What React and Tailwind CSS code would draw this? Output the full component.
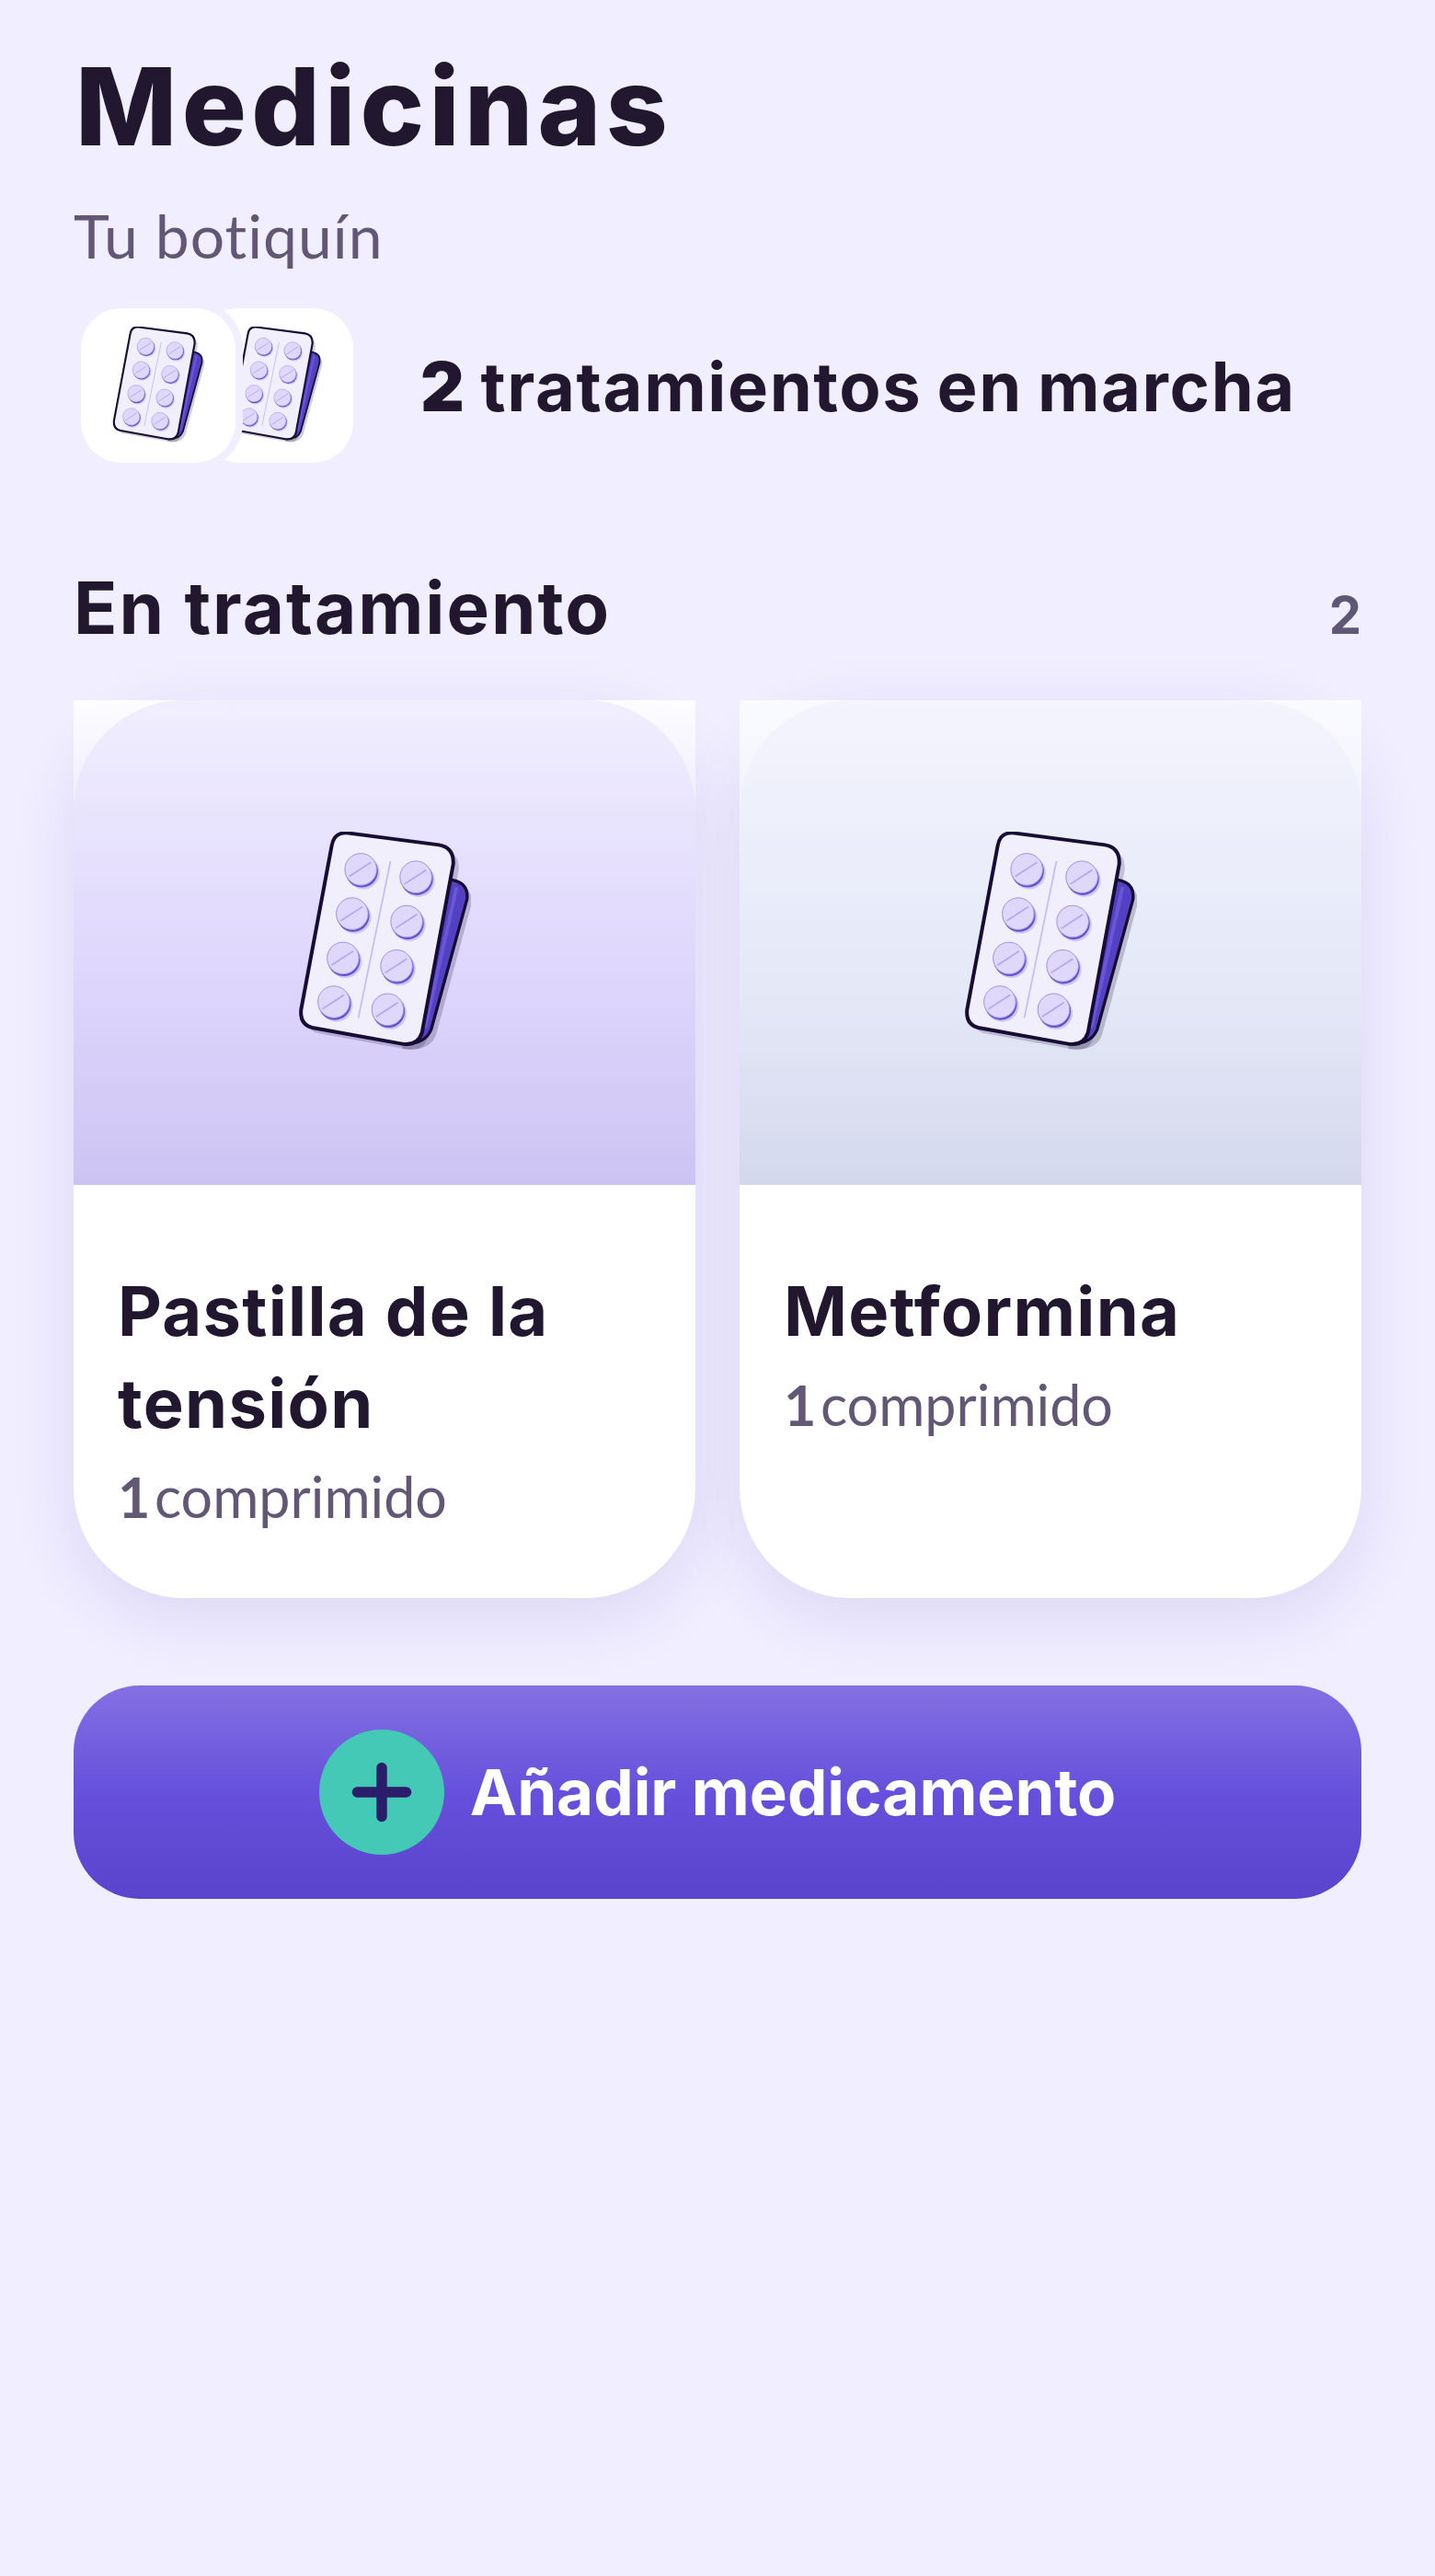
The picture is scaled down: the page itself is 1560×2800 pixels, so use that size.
const FRONT = "M290 133 L590 172 Q640 180 637 235 L535 785 Q520 830 470 822 L180 770 Q135 760 140 710 L240 175 Q248 130 290 133 Z";

const Blister = ({ className }) => {
  const pills = [
    [335, 252], [515, 277], [307, 397], [485, 422],
    [277, 542], [452, 567], [247, 685], [423, 710],
  ];
  return (
    <svg viewBox="130 130 565 725" className={className} aria-hidden="true">
      <path d="M600 300 L650 302 Q703 312 697 365 L580 795 Q558 848 470 838 Z" fill="#1c1238" opacity="0.22" />
      <path d={FRONT} transform="translate(18 18)" fill="#1c1238" opacity="0.2" />
      <path d="M600 285 L635 287 Q688 297 682 350 L565 775 Q545 825 470 822 Z" fill="#5341c4" stroke="#170c33" strokeWidth="10" strokeLinejoin="round" />
      <path d="M648 310 L545 770" stroke="#6a56d6" strokeWidth="12" fill="none" />
      <path d={FRONT} fill="#f2effd" stroke="#170c33" strokeWidth="12" />
      <path d="M432 225 L327 738" stroke="#c5baf2" strokeWidth="5" />
      {pills.map(([x, y], i) => (
        <g key={i}>
          <circle cx={x + 8} cy={y + 11} r="54" fill="#8b7cd8" opacity="0.35" />
          <circle cx={x + 3} cy={y + 6} r="53" fill="#6350cc" />
          <circle cx={x} cy={y} r="52" fill="#dfd8fa" stroke="#9f90e6" strokeWidth="3" />
          <path d={`M${x - 36} ${y + 22} L${x + 32} ${y - 22}`} stroke="#b3a5ee" strokeWidth="5" strokeLinecap="round" />
        </g>
      ))}
    </svg>
  );
};

const Card = ({ name, outer, inner }) => (
  <div className="flex flex-col rounded-[120px] bg-white shadow-[0_20px_70px_rgba(80,60,180,0.13)]">
    <div className={`relative h-[527px] ${outer}`}>
      <div className={`absolute inset-0 rounded-t-[120px] ${inner}`} />
      <div className="relative flex h-full items-center justify-center">
        <Blister className="h-[242px] w-[188px]" />
      </div>
    </div>
    <div className="flex h-[449px] flex-col px-12 pt-[87px] text-[#21182f]">
      <h3 className="font-['Inter',sans-serif] text-[74px] font-bold leading-[100px] tracking-[1.3px]">{name}</h3>
      <p className="mt-[12px] font-['Lato',sans-serif] text-[61px] leading-[80px] text-[#625875] [word-spacing:-11px]">
        <span className="font-bold">1</span> comprimido
      </p>
    </div>
  </div>
);

export default function App() {
  return (
    <div className="min-h-[2800px] bg-[#f1eeff] px-20 pt-[48px] font-['Inter',sans-serif] text-[#21182f]">
      <h1 className="pl-[2px] text-[117px] font-extrabold leading-[136px] tracking-[5.3px]">Medicinas</h1>
      <p className="mt-[32px] font-['Lato',sans-serif] text-[66px] leading-[80px] tracking-[1px] text-[#625875]">Tu botiquín</p>

      <div className="mt-[39px] flex items-center">
        <div className="ml-2 flex">
          <div className="relative z-10 flex h-[168px] w-[168px] items-center justify-center rounded-[44px] bg-white ring-8 ring-[#f1eeff]">
            <Blister className="h-[128px] w-[100px]" />
          </div>
          <div className="-ml-10 flex h-[168px] w-[168px] items-center justify-center rounded-[44px] bg-white">
            <Blister className="h-[128px] w-[100px]" />
          </div>
        </div>
        <p className="ml-[73px] mt-[2px] text-[74px] font-bold leading-[96px] tracking-[1.6px] [word-spacing:-3px]">
          <span className="font-black">2</span> tratamientos en marcha
        </p>
      </div>

      <div className="mt-[110px] flex items-baseline justify-between">
        <h2 className="text-[78px] font-bold leading-[96px] tracking-[2px]">En tratamiento</h2>
        <span className="text-[56px] font-bold leading-[64px] text-[#5f5773]">2</span>
      </div>

      <div className="mt-[52px] grid grid-cols-2 items-stretch gap-12">
        <Card
          name="Pastilla de la tensión"
          outer="bg-gradient-to-b from-[#fdfcff] via-[#ece7fe] via-30% to-[#cdc3f3]"
          inner="bg-gradient-to-b from-[#f1eefe] via-[#ddd5fc] via-60% to-[#cdc3f3]"
        />
        <Card
          name="Metformina"
          outer="bg-gradient-to-b from-[#fafbff] via-[#eef1fb] via-30% to-[#d4d8ec]"
          inner="bg-gradient-to-b from-[#f3f4fd] via-[#e4e8f7] via-60% to-[#d4d8ec]"
        />
      </div>

      <button className="mt-[95px] flex h-[232px] w-full items-center justify-center gap-[28px] rounded-[72px] bg-gradient-to-b from-[#8570e2] via-[#6650dc] via-50% to-[#5a44cc] text-white">
        <span className="flex h-[136px] w-[136px] items-center justify-center rounded-full bg-[#44c9b7]">
          <svg viewBox="0 0 64 64" className="h-[68px] w-[68px]" fill="none" stroke="#2c1d6b" strokeWidth="10.8" strokeLinecap="round">
            <path d="M32 7V57M7 32H57" />
          </svg>
        </span>
        <span className="text-[69px] font-bold leading-[88px]">Añadir medicamento</span>
      </button>
    </div>
  );
}
